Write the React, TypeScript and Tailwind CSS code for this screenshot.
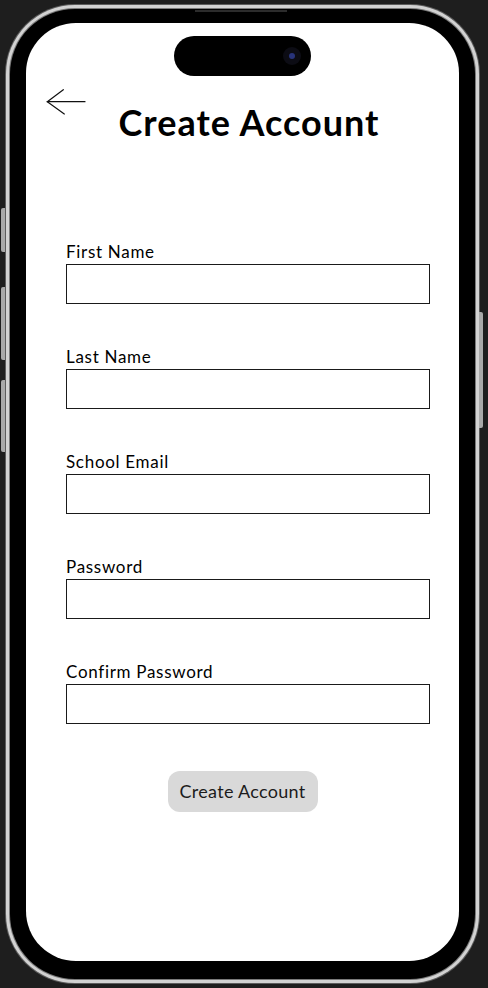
import React from 'react'

const fields = ['First Name', 'Last Name', 'School Email', 'Password', 'Confirm Password']

function BackArrow() {
  return (
    <svg width="40" height="26" viewBox="0 0 40 26" fill="none" stroke="#111" strokeWidth="1.2" strokeLinecap="round">
      <path d="M1.3 12.7 H39" />
      <path d="M17.3 0.7 L1.3 12.7 L18.3 25" />
    </svg>
  )
}

export default function App() {
  return (
    <div className="relative w-[488px] h-[988px] bg-[#1e1e1e] overflow-hidden" style={{ fontFamily: 'Lato, "Open Sans", sans-serif' }}>
      {/* side buttons */}
      <div className="absolute left-[1px] top-[208px] w-[4px] h-[44px] rounded-l-[2px] bg-[#a9a9a9]" />
      <div className="absolute left-[1px] top-[287px] w-[4px] h-[73px] rounded-l-[2px] bg-[#a9a9a9]" />
      <div className="absolute left-[1px] top-[380px] w-[4px] h-[72px] rounded-l-[2px] bg-[#a9a9a9]" />
      <div className="absolute left-[479px] top-[312px] w-[4px] h-[116px] rounded-r-[2px] bg-[#a9a9a9]" />

      {/* phone */}
      <div className="ml-[5px] mt-[4px] w-[475px] h-[980px] rounded-[70px] bg-[#5c5c5c] p-px">
        <div className="h-full rounded-[69px] bg-[#d2d2d2] p-[3px]">
          <div className="h-full rounded-[66px] bg-[#7a7a7a] p-px">
            <div className="relative h-full rounded-[65px] bg-black px-[16px] pt-[14px] pb-[18px]">
              <div className="absolute left-[185px] top-[1px] w-[92px] h-[2px] bg-[#2c2c2c]" />

              {/* screen */}
              <div className="h-full rounded-[50px] bg-white flex flex-col overflow-hidden">
                <div className="mx-auto mt-[13px] w-[137px] h-[40px] rounded-full bg-black flex items-center justify-end pr-[10px]">
                  <div className="w-[18px] h-[18px] rounded-full bg-[#0c0c14] flex items-center justify-center">
                    <div className="w-[6px] h-[6px] rounded-full bg-[#28337a]" />
                  </div>
                </div>

                <div className="relative mt-[26px]">
                  <div className="absolute left-[20px] top-[-13px]">
                    <BackArrow />
                  </div>
                  <h1 className="pl-[13px] text-center text-[36px] leading-[40px] tracking-[1px] font-bold text-black">Create Account</h1>
                </div>

                <div className="mt-[101px] ml-[40px] w-[364px] flex flex-col gap-[44px]">
                  {fields.map(f => (
                    <div key={f} className="flex flex-col">
                      <label className="text-[17px] leading-[18px] tracking-[0.7px] text-black mb-[3px]">{f}</label>
                      <div className="h-[40px] border border-[#1a1a1a]" />
                    </div>
                  ))}
                </div>

                <button className="mx-auto mt-[47px] w-[150px] h-[41px] rounded-[12px] bg-[#d9d9d9] text-[18px] tracking-[0.3px] text-[#1c1c1c]">
                  Create Account
                </button>
              </div>
            </div>
          </div>
        </div>
      </div>
    </div>
  )
}
